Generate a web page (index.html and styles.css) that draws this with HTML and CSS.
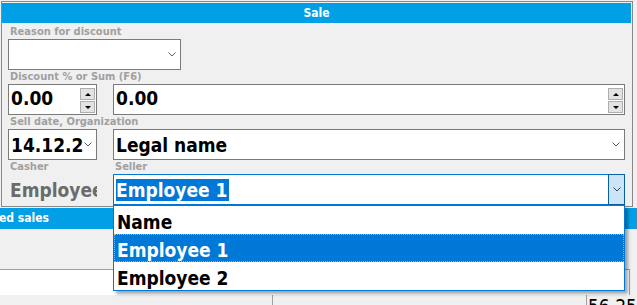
FILE: index.html
```html
<!DOCTYPE html>
<html>
<head>
<meta charset="utf-8">
<title>Sale</title>
<link rel="stylesheet" href="styles.css">
</head>
<body>
<div class="app">
  <div class="app-top"></div>
  <div class="app-bar"><span class="app-bar-title">ed sales</span></div>
  <div class="app-gap"></div>
  <div class="app-panel"></div>
  <div class="app-foot">
    <div class="foot-left"></div>
    <div class="foot-mid"></div>
    <div class="foot-right"><span class="foot-sum">56.25</span></div>
  </div>
</div>

<div class="dialog">
  <div class="dlg-title">Sale</div>
  <div class="dlg-body">
    <div class="lbl span">Reason for discount</div>
    <div class="combo reason">
      <span class="combo-text"></span>
      <svg class="chev" width="8" height="5" viewBox="0 0 8 5"><polyline points="0.5,0.5 4,4 7.5,0.5" fill="none" stroke="#606060" stroke-width="1"/></svg>
    </div>

    <div class="lbl span">Discount % or Sum (F6)</div>
    <div class="spin">
      <span class="val">0.00</span>
      <div class="spin-btns"><span class="sbtn"><i class="tri-up"></i></span><span class="sbtn"><i class="tri-down"></i></span></div>
    </div>
    <div class="spin">
      <span class="val">0.00</span>
      <div class="spin-btns"><span class="sbtn"><i class="tri-up"></i></span><span class="sbtn"><i class="tri-down"></i></span></div>
    </div>

    <div class="lbl span">Sell date, Organization</div>
    <div class="combo date">
      <span class="combo-text">14.12.2020</span>
      <svg class="chev" width="8" height="5" viewBox="0 0 8 5"><polyline points="0.5,0.5 4,4 7.5,0.5" fill="none" stroke="#606060" stroke-width="1"/></svg>
    </div>
    <div class="combo org">
      <span class="combo-text">Legal name</span>
      <svg class="chev" width="8" height="5" viewBox="0 0 8 5"><polyline points="0.5,0.5 4,4 7.5,0.5" fill="none" stroke="#606060" stroke-width="1"/></svg>
    </div>

    <div class="lbl">Casher</div>
    <div class="lbl">Seller</div>
    <div class="field casher"><span class="combo-text">Employee 1</span></div>
    <div class="combo seller">
      <span class="combo-text"><span class="sel">Employee 1</span></span>
      <span class="drop-btn">
        <svg width="8" height="5" viewBox="0 0 8 5"><polyline points="0.5,0.5 4,4 7.5,0.5" fill="none" stroke="#404040" stroke-width="1"/></svg>
      </span>
      <div class="list">
        <div class="item">Name</div>
        <div class="item active">Employee 1</div>
        <div class="item">Employee 2</div>
      </div>
    </div>
  </div>
</div>
</body>
</html>
```

FILE: styles.css
```css
html, body {
  margin: 0;
  padding: 0;
}
body {
  width: 637px;
  height: 305px;
  overflow: hidden;
  position: relative;
  background: #f0f0f0;
  font-family: "DejaVu Sans Condensed", "DejaVu Sans", sans-serif;
  font-stretch: semi-condensed;
}

/* background application */
.app {
  display: flex;
  flex-direction: column;
  width: 637px;
}
.app-top { height: 208px; }
.app-bar {
  height: 21px;
  background: #009fe6;
  color: #fff;
  font-weight: bold;
  font-size: 12px;
  line-height: 21px;
  white-space: nowrap;
  overflow: hidden;
}
.app-bar-title { margin-left: -1px; }
.app-gap { height: 40px; }
.app-panel {
  height: 25px;
  width: 629px;
  background: #fff;
  border-top: 1px solid #a0a0a0;
  border-right: 1px solid #a0a0a0;
}
.app-foot {
  display: flex;
  height: 20px;
}
.foot-left { width: 272px; border-right: 1px solid #a0a0a0; }
.foot-mid { width: 313px; }
.foot-right {
  flex: 1;
  border-left: 1px solid #a0a0a0;
  padding-left: 1px;
  font-size: 19px;
  line-height: 22px;
  color: #000;
  white-space: nowrap;
}

/* dialog */
.dialog {
  position: absolute;
  left: 1px;
  top: 1px;
  width: 632px;
  height: 206px;
  box-sizing: border-box;
  border: 1px solid #888;
  background: #f0f0f0;
}
.dlg-title {
  height: 20px;
  margin: 1px 1px 0 0;
  background: #009fe6;
  color: #fff;
  font-weight: bold;
  font-size: 12px;
  line-height: 20px;
  text-align: center;
}
.dlg-body {
  display: grid;
  grid-template-columns: 89px 512px;
  grid-auto-rows: 14px 31px;
  column-gap: 16px;
  padding: 2px 0 0 6px;
}
.lbl {
  font-size: 11px;
  font-weight: bold;
  line-height: 14px;
  color: #a0a0a0;
  padding-left: 2px;
  white-space: nowrap;
}
.span { grid-column: 1 / -1; }

.combo, .spin, .field {
  box-sizing: border-box;
  height: 31px;
  display: flex;
  align-items: center;
  position: relative;
  font-size: 19px;
  font-weight: bold;
  color: #000;
  white-space: nowrap;
}
.combo, .spin {
  background: #fff;
  border: 1px solid #7a7a7a;
}
.combo-text {
  flex: 1;
  min-width: 0;
  overflow: hidden;
  padding-left: 2px;
  line-height: 22px;
}
.chev { flex: none; margin-right: 4px; }
.reason { grid-column: 1 / -1; width: 173px; }
.date .chev { margin-right: 4px; margin-left: 1px; }
.org .chev { margin-right: 4px; }

.spin .val {
  flex: 1;
  padding-left: 2px;
  line-height: 22px;
  padding-bottom: 3px;
}
.spin-btns {
  display: flex;
  flex-direction: column;
  gap: 1px;
  align-self: stretch;
  padding: 3px 1px 1px 0;
}
.sbtn {
  box-sizing: border-box;
  width: 15px;
  height: 12px;
  background: #e3e3e3;
  border: 1px solid #adadad;
  display: flex;
  align-items: center;
  justify-content: center;
}
.tri-up, .tri-down {
  width: 0;
  height: 0;
  border-left: 3px solid transparent;
  border-right: 3px solid transparent;
}
.tri-up { border-bottom: 3px solid #000; }
.tri-down { border-top: 3px solid #000; }

.field.casher { color: #6b6b6b; overflow: hidden; }

.seller { border-color: #0078d7; }
.sel {
  background: #0078d7;
  color: #fff;
  display: inline-block;
  line-height: 22px;
  padding-right: 1px;
}
.drop-btn {
  box-sizing: border-box;
  align-self: stretch;
  width: 17px;
  margin: -1px -1px -1px 0;
  background: #cce4f7;
  border: 1px solid #0a5ea8;
  display: flex;
  align-items: center;
  justify-content: center;
}
.list {
  position: absolute;
  left: -1px;
  top: 30px;
  width: 512px;
  box-sizing: border-box;
  background: #fff;
  border: 1px solid #0078d7;
  box-shadow: 3px 3px 3px rgba(0, 0, 0, 0.35);
  z-index: 2;
}
.item {
  box-sizing: border-box;
  height: 28px;
  padding: 3px 0 0 3px;
  display: flex;
  align-items: center;
  line-height: 22px;
  color: #000;
}
.item.active {
  background: #0078d7;
  color: #fff;
  border: 1px dotted #e8a050;
  padding-left: 2px;
}
```
